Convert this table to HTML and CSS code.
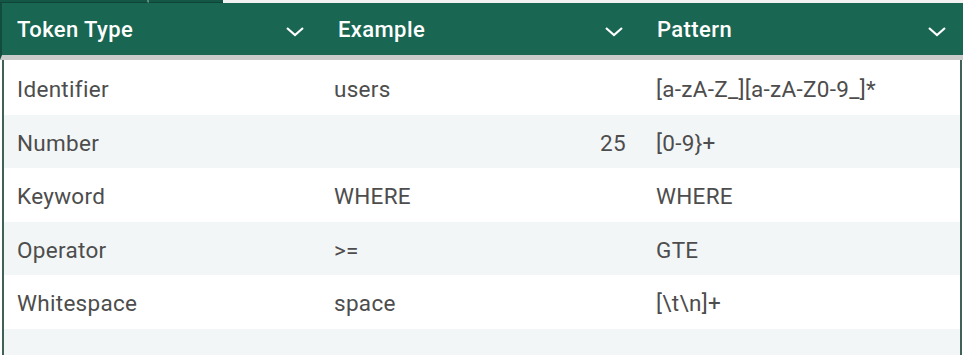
FILE: index.html
```html
<!DOCTYPE html>
<html>
<head>
<meta charset="utf-8">
<link rel="stylesheet" href="styles.css">
</head>
<body>
<div class="tabs">
  <div class="tab tab-a"></div>
  <div class="tab tab-b"></div>
  <div class="tab-rest"></div>
</div>
<div class="table">
  <div class="head">
    <div class="th"><span>Token Type</span><svg class="chev" viewBox="0 0 20 11"><path d="M2 2 L10 9 L18 2" fill="none" stroke="#fff" stroke-width="2.2"/></svg></div>
    <div class="th"><span>Example</span><svg class="chev" viewBox="0 0 20 11"><path d="M2 2 L10 9 L18 2" fill="none" stroke="#fff" stroke-width="2.2"/></svg></div>
    <div class="th"><span>Pattern</span><svg class="chev" viewBox="0 0 20 11"><path d="M2 2 L10 9 L18 2" fill="none" stroke="#fff" stroke-width="2.2"/></svg></div>
  </div>
  <div class="body">
    <div class="row"><div class="td">Identifier</div><div class="td">users</div><div class="td">[a-zA-Z_][a-zA-Z0-9_]*</div></div>
    <div class="row alt"><div class="td">Number</div><div class="td num">25</div><div class="td">[0-9}+</div></div>
    <div class="row"><div class="td">Keyword</div><div class="td">WHERE</div><div class="td">WHERE</div></div>
    <div class="row alt"><div class="td">Operator</div><div class="td">&gt;=</div><div class="td">GTE</div></div>
    <div class="row"><div class="td">Whitespace</div><div class="td">space</div><div class="td">[\t\n]+</div></div>
    <div class="row alt"><div class="td"></div><div class="td"></div><div class="td"></div></div>
  </div>
</div>
</body>
</html>
```
FILE: styles.css
```css
html, body {
  margin: 0;
  padding: 0;
  background: #ffffff;
  font-family: Roboto, "Liberation Sans", sans-serif;
  overflow: hidden;
}
.tabs {
  display: flex;
  height: 3px;
}
.tab {
  background: #155746;
  border-bottom: 1px solid #0f4536;
  box-sizing: border-box;
}
.tab-a { width: 149px; border-right: 2px solid #5e8a7e; }
.tab-b { width: 74px; }
.tab-rest { flex: 1; background: #f2f2f2; }
.table {
  width: 963px;
}
.head {
  display: grid;
  grid-template-columns: 321px 319px 323px;
  background: #196652;
  border-left: 2px solid #124c3d;
  box-sizing: border-box;
  border-bottom: 5px solid #c9cbca;
  height: 57px;
}
.th {
  display: flex;
  align-items: center;
  justify-content: space-between;
  padding: 0 18px 0 15px;
  color: #ffffff;
  font-weight: 500;
  font-size: 22px;
  letter-spacing: 0.4px;
}
.chev {
  width: 20px;
  height: 11px;
  margin-top: 4px;
}
.body {
  margin-left: 2px;
  margin-right: 1px;
  border-left: 2px solid #3f6157;
  border-right: 2px solid #3f6157;
}
.row {
  display: grid;
  grid-template-columns: 317px 319px 320px;
  height: 53.5px;
  align-items: center;
  background: #ffffff;
}
.row:first-child { height: 54.5px; }
.row.alt { background: #f3f6f7; }
.td {
  padding: 3px 14px 0 13px;
  color: #4d4d4d;
  font-size: 22.5px;
  letter-spacing: 0.3px;
  white-space: nowrap;
}
.td:last-child { padding-left: 16px; }
.td.num {
  text-align: right;
}
```
